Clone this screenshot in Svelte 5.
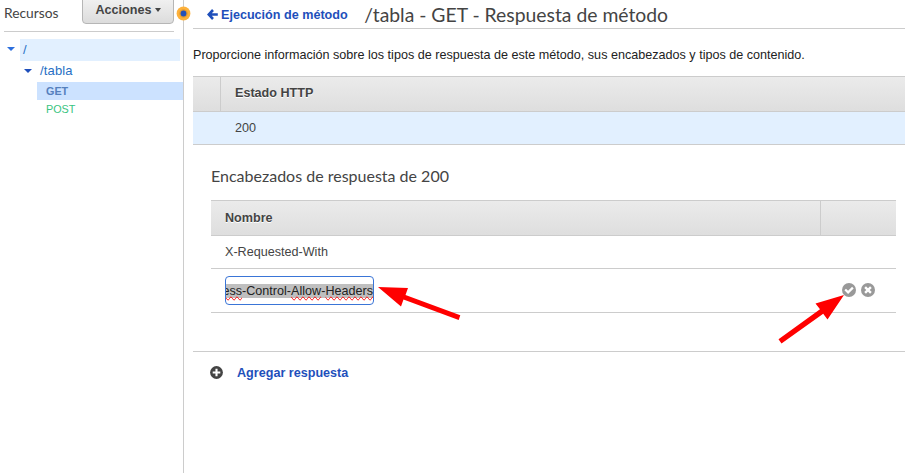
<script>
  const headers = ['X-Requested-With'];
</script>

<div class="app">
  <aside>
    <div class="top">
      <span class="heading">Recursos</span>
      <button>Acciones <i></i></button>
    </div>
    <ul class="tree">
      <li class="root"><i class="caret"></i><span>/</span></li>
      <li class="child"><i class="caret"></i><span>/tabla</span></li>
      <li class="get">GET</li>
      <li class="post">POST</li>
    </ul>
    <svg class="handle" width="15" height="15" viewBox="0 0 15 15">
      <circle cx="7.5" cy="7.5" r="6.9" fill="#fdb13b" />
      <circle cx="7.5" cy="7.5" r="4.2" fill="#e59a2e" />
      <circle cx="7.5" cy="7.5" r="2.9" fill="#2450b8" />
    </svg>
  </aside>

  <main>
    <header>
      <a class="back" href="#top">
        <svg width="11" height="11" viewBox="0 0 11 11"><path d="M6 1 L1.7 5.5 L6 10 M2 5.5 H10.8" fill="none" stroke="currentColor" stroke-width="2.6" /></svg>
        <span>Ejecución de método</span>
      </a>
      <h1>/tabla - GET - Respuesta de método</h1>
    </header>
    <p>Proporcione información sobre los tipos de respuesta de este método, sus encabezados y tipos de contenido.</p>

    <div class="thead outer"><div class="gutter"></div><b>Estado HTTP</b></div>
    <div class="status">200</div>

    <section>
      <h2>Encabezados de respuesta de 200</h2>
      <div class="thead inner"><b>Nombre</b><div class="actions"></div></div>
      {#each headers as name}
        <div class="row">{name}</div>
      {/each}
      <div class="row edit">
        <div class="field"><span class="selected"><u>Access</u>-Control-<u>Allow</u>-<u>Headers</u></span></div>
        <div class="icons">
          <svg width="14" height="14" viewBox="0 0 14 14"><circle cx="7" cy="7" r="7" fill="#999" /><path d="M3.2 6.5 L6.1 9.4 L10.9 4.6" fill="none" stroke="#fff" stroke-width="2.2" /></svg>
          <svg width="14" height="14" viewBox="0 0 14 14"><circle cx="7" cy="7" r="7" fill="#999" /><path d="M4.1 4.1 L9.9 9.9 M9.9 4.1 L4.1 9.9" stroke="#fff" stroke-width="2.4" /></svg>
        </div>
      </div>
    </section>

    <div class="add">
      <svg width="13" height="13" viewBox="0 0 13 13"><circle cx="6.5" cy="6.5" r="6.4" fill="#444" /><path d="M6.5 2.7 V10.3 M2.7 6.5 H10.3" stroke="#fff" stroke-width="2.1" /></svg>
      <a href="#add">Agregar respuesta</a>
    </div>
  </main>

  <svg class="arrows" width="905" height="473" viewBox="0 0 905 473" fill="#f00">
    <path d="M378 287 L408 288 L405.5 295 L460.3 315.2 L458.7 320 L403.5 299.5 L401 306.5 Z" />
    <path d="M844 295 L827.5 319.5 L823.2 313.8 L781.5 343.5 L778.5 339.2 L820 309.3 L815.5 303.5 Z" />
  </svg>
</div>

<style>
  .app {
    position: relative;
    display: flex;
    width: 905px;
    height: 473px;
    overflow: hidden;
    background: #fff;
    color: #444;
    font: 12.6px/16px "Liberation Sans", Arial, sans-serif;
  }
  svg { display: block; flex: none; }
  a { color: #1e4fbb; font-weight: bold; text-decoration: none; }
  aside {
    position: relative;
    box-sizing: border-box;
    width: 184px;
    border-right: 1px solid #ccc;
  }
  .top {
    display: flex;
    justify-content: space-between;
    box-sizing: border-box;
    height: 32px;
    margin: 0 9px 0 4px;
    border-bottom: 1px solid #ccc;
  }
  .heading { padding-top: 4px; font: 13.8px/17px Lato, sans-serif; }
  button {
    display: flex;
    align-items: center;
    justify-content: center;
    gap: 3px;
    box-sizing: border-box;
    width: 92px;
    height: 30px;
    margin-top: -6px;
    padding: 2px 0 0;
    border: 1px solid #b6b6b6;
    border-radius: 4px;
    background: linear-gradient(#f4f4f4, #dcdcdc);
    color: #444;
    font: bold 12.6px/16px "Liberation Sans", Arial, sans-serif;
  }
  button i {
    border: 3.5px solid transparent;
    border-top: 4px solid #444;
    border-bottom: 0;
  }
  .tree { margin: 7px 0 0; padding: 0; list-style: none; color: #2770c4; font-size: 13px; }
  .tree li { display: flex; align-items: center; }
  .caret { margin-bottom: 2px; border: 4px solid transparent; border-top: 4px solid #2d6fdd; border-bottom: 0; }
  .root { height: 22px; padding-left: 7px; }
  .root span { box-sizing: border-box; width: 160px; margin-left: 5px; padding-left: 3px; background: #e2f0ff; line-height: 22px; }
  .child { height: 19px; padding: 0 0 2px 24px; }
  .child .caret { margin-bottom: 0; border-top-color: #1e4fbb; }
  .child span { margin-left: 8px; letter-spacing: 0.15px; }
  .tree .get { height: 18px; margin-left: 37px; padding-left: 9px; background: #cce2ff; color: #5580bd; font-size: 10.8px; font-weight: bold; }
  .tree .post { height: 18px; padding-left: 46px; color: #39c481; font-size: 10.8px; }
  .handle { position: absolute; top: 6px; left: 176px; }
  main { flex: 1; padding-left: 9px; }
  header {
    display: flex;
    box-sizing: border-box;
    height: 29px;
    padding-left: 14px;
    border-bottom: 1px solid #ccc;
  }
  .back { display: flex; align-items: center; gap: 3px; height: 29px; }
  h1 { margin: 3px 0 0 16.5px; font: 19.35px/24px Lato, sans-serif; white-space: nowrap; }
  p { margin: 18px 0 13px; color: #222; white-space: nowrap; }
  .thead {
    display: flex;
    box-sizing: border-box;
    height: 36px;
    border: solid #ccc;
    border-width: 1px 0;
    background: linear-gradient(#ebebeb, #dedede);
    text-shadow: 0 1px 0 #fff;
  }
  .gutter { width: 27px; border-right: 1px solid #ccc; }
  .outer { line-height: 32px; }
  .outer b { padding-left: 14px; }
  .status { height: 32px; padding-left: 42px; border-bottom: 1px solid #ccc; background: #e2f0ff; line-height: 32px; }
  section { width: 685px; margin-left: 18px; }
  h2 { margin: 0; padding: 21px 0 14px; font: 16px/20px Lato, sans-serif; }
  .inner { line-height: 34px; }
  .inner b { flex: 1; padding-left: 14px; }
  .actions { width: 75px; border-left: 1px solid #ccc; }
  .row { height: 32px; padding-left: 14px; border-bottom: 1px solid #ccc; line-height: 32px; }
  .edit { display: flex; justify-content: space-between; align-items: center; height: 43px; padding-right: 21px; }
  .field {
    display: flex;
    justify-content: flex-end;
    align-items: center;
    box-sizing: border-box;
    width: 149px;
    height: 29px;
    overflow: hidden;
    border: 1px solid #3a75d7;
    border-radius: 4px;
    line-height: 14px;
    color: #222;
  }
  .selected { flex: none; background: #bfbfbf; white-space: nowrap; }
  .selected u { text-decoration: spelling-error; }
  .icons { display: flex; gap: 5px; margin-bottom: 2px; }
  .add { display: flex; align-items: center; gap: 14px; height: 42px; margin-top: 38px; padding-left: 17px; border-top: 1px solid #ccc; }
  .add svg { margin-bottom: 2px; }
  .arrows { position: absolute; top: 0; left: 0; pointer-events: none; }
</style>
